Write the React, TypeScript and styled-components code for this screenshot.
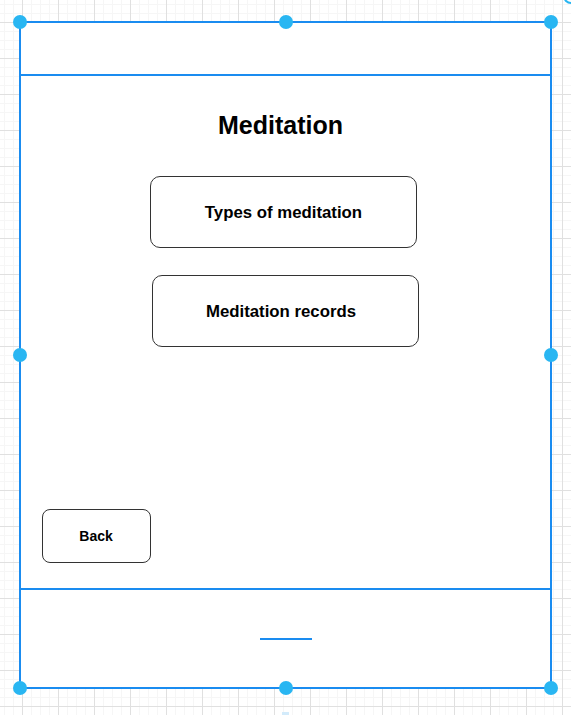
import styled, { createGlobalStyle } from "styled-components";

const LINE = "#1a8cf0";
const HANDLE = "#29b6f2";

const GlobalStyle = createGlobalStyle`
  html, body {
    margin: 0;
    padding: 0;
    background: #ffffff;
  }
  body {
    font-family: "Liberation Sans", Arial, sans-serif;
  }
`;

type HandleSpot = { x: "start" | "mid" | "end"; y: "start" | "mid" | "end" };

const handles: HandleSpot[] = [
  { x: "start", y: "start" },
  { x: "mid", y: "start" },
  { x: "end", y: "start" },
  { x: "start", y: "mid" },
  { x: "end", y: "mid" },
  { x: "start", y: "end" },
  { x: "mid", y: "end" },
  { x: "end", y: "end" },
];

// handles sit on the middle of the 2px frame border
const spot = (s: HandleSpot["x"]) =>
  s === "start" ? "-1px" : s === "mid" ? "50%" : "calc(100% + 1px)";

export default function App() {
  return (
    <>
      <GlobalStyle />
      <Canvas>
        <Frame>
          <Header />
          <Body>
            <Title>Meditation</Title>
            <MenuBox $offset={129} $gap={36} $shift={0}>
              Types of meditation
            </MenuBox>
            <MenuBox $offset={131} $gap={27} $shift={9}>
              Meditation records
            </MenuBox>
            <Spacer />
            <BackButton>Back</BackButton>
          </Body>
          <Footer>
            <HomeBar />
          </Footer>
          {handles.map((h, i) => (
            <Handle key={i} $x={spot(h.x)} $y={spot(h.y)} />
          ))}
        </Frame>
        <RotateHandle width="20" height="20" viewBox="0 0 20 20">
          <circle cx="10" cy="6" r="7" fill="none" stroke={HANDLE} strokeWidth="2" />
        </RotateHandle>
        <GhostMark />
      </Canvas>
    </>
  );
}

const Canvas = styled.div`
  position: relative;
  width: 571px;
  height: 715px;
  overflow: hidden;
  box-sizing: border-box;
  padding: 21px 0 0 19px;
  background-color: #ffffff;
  background-image: linear-gradient(to right, #e0e0e0 1px, transparent 1px),
    linear-gradient(to bottom, #e0e0e0 1px, transparent 1px),
    linear-gradient(to right, #f6f6f6 1px, transparent 1px),
    linear-gradient(to bottom, #f6f6f6 1px, transparent 1px);
  background-size: 36px 36px, 36px 36px, 9px 9px, 9px 9px;
  background-position: 22px 22px, 22px 22px, 4px 4px, 4px 4px;
`;

const Frame = styled.div`
  position: relative;
  width: 533px;
  height: 668px;
  box-sizing: border-box;
  border: 2px solid ${LINE};
  background: #ffffff;
  display: flex;
  flex-direction: column;
`;

const Header = styled.div`
  height: 51px;
  flex-shrink: 0;
  border-bottom: 2px solid ${LINE};
`;

const Body = styled.div`
  flex: 1;
  display: flex;
  flex-direction: column;
  align-items: flex-start;
`;

const Title = styled.h1`
  margin: 34px 0 0 0;
  align-self: stretch;
  padding-right: 10px;
  text-align: center;
  font-size: 25px;
  line-height: 30px;
  font-weight: 700;
  color: #000000;
`;

const MenuBox = styled.button<{ $offset: number; $gap: number; $shift: number }>`
  margin: ${({ $gap }) => $gap}px 0 0 ${({ $offset }) => $offset}px;
  width: 267px;
  height: 72px;
  box-sizing: border-box;
  border: 1px solid #333333;
  border-radius: 10px;
  background: #ffffff;
  font-family: "Liberation Sans", Arial, sans-serif;
  font-size: 16.8px;
  font-weight: 700;
  color: #000000;
  padding: 2px ${({ $shift }) => $shift}px 0 0;
  cursor: pointer;
`;

const Spacer = styled.div`
  flex: 1;
`;

const BackButton = styled.button`
  margin: 0 0 25px 21px;
  width: 109px;
  height: 54px;
  box-sizing: border-box;
  border: 1px solid #333333;
  border-radius: 8px;
  background: #ffffff;
  font-family: "Liberation Sans", Arial, sans-serif;
  font-size: 14px;
  font-weight: 700;
  color: #000000;
  padding: 0 1px 1px 0;
  cursor: pointer;
`;

const Footer = styled.div`
  height: 97px;
  flex-shrink: 0;
  border-top: 2px solid ${LINE};
  display: flex;
  align-items: center;
  justify-content: center;
`;

const HomeBar = styled.div`
  width: 52px;
  height: 2px;
  background: ${LINE};
`;

const Handle = styled.span<{ $x: string; $y: string }>`
  position: absolute;
  left: ${({ $x }) => $x};
  top: ${({ $y }) => $y};
  width: 14px;
  height: 14px;
  border-radius: 50%;
  background: ${HANDLE};
  transform: translate(-50%, -50%);
`;

const RotateHandle = styled.svg`
  position: absolute;
  left: 561px;
  top: -10px;
`;

const GhostMark = styled.span`
  position: absolute;
  left: 282px;
  top: 712px;
  width: 7px;
  height: 4px;
  background: #d3ebfb;
`;
